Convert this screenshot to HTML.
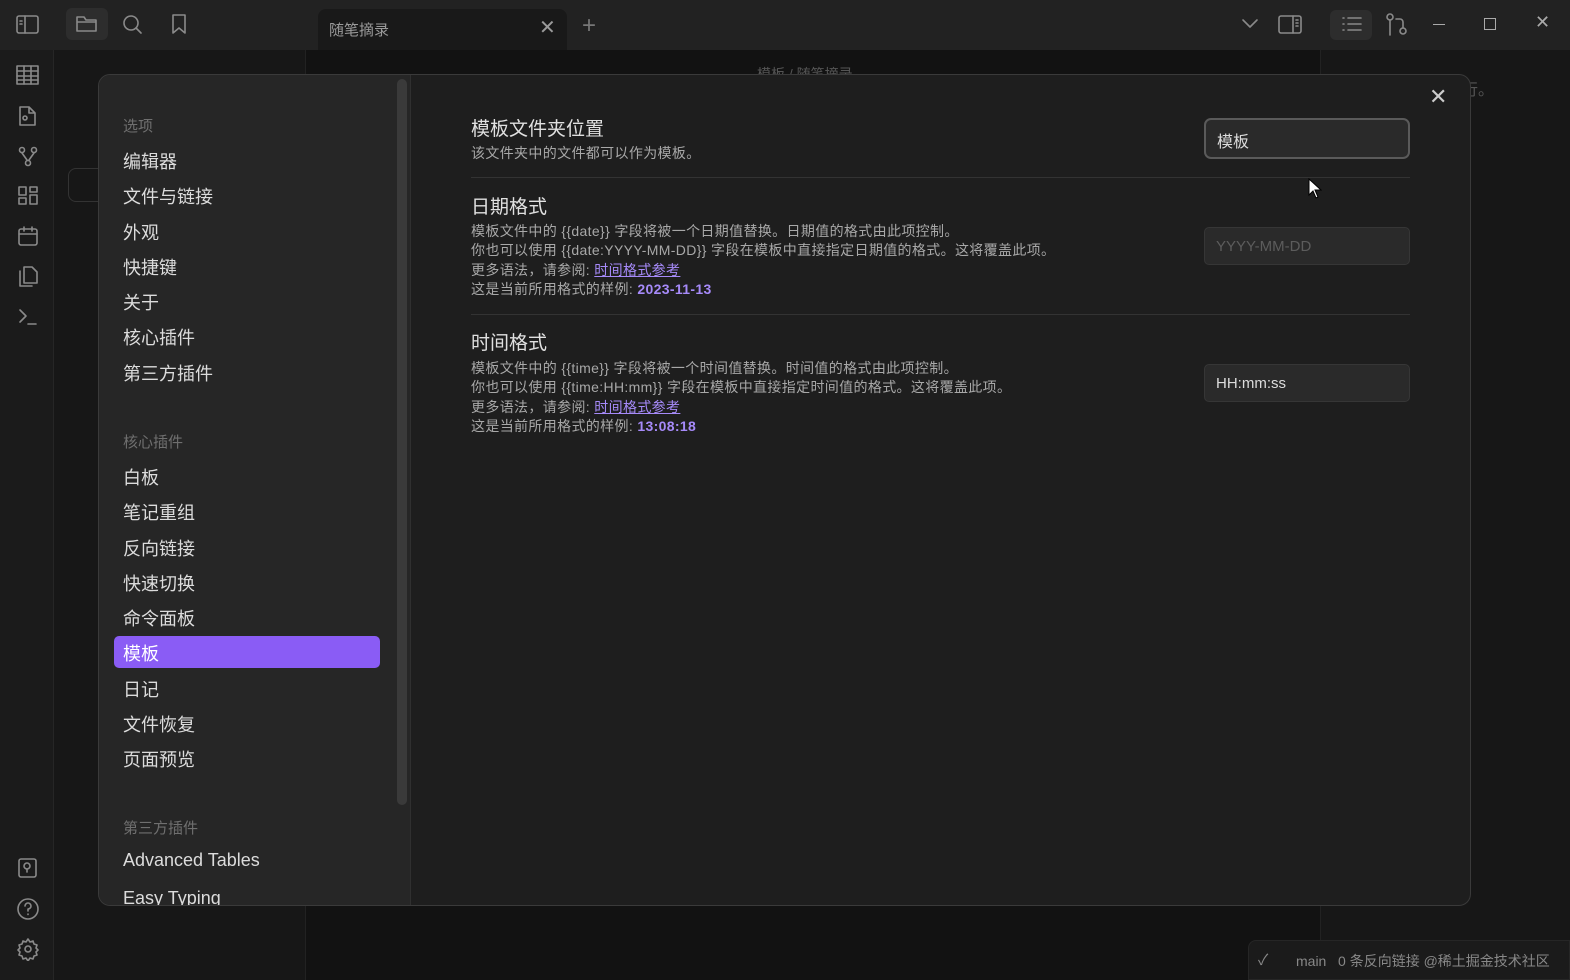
<!DOCTYPE html>
<html><head><meta charset="utf-8"><style>
*{box-sizing:border-box;margin:0;padding:0}
body{width:1570px;height:980px;overflow:hidden;background:#141414;font-family:"Liberation Sans","Noto Sans CJK SC",sans-serif;position:relative;color:#dadada}
.abs{position:absolute}
.ic{position:absolute;stroke:#8a8a8a;fill:none;stroke-width:1.6;stroke-linecap:round;stroke-linejoin:round}
.nav{position:absolute;left:123px;font-size:18px;color:#dcdcdc}
.hd{position:absolute;left:123px;font-size:15px;color:#6f6f6f}
.t{position:absolute;left:471px;font-size:19px;color:#e0e0e0}
.d{position:absolute;left:471px;font-size:14px;color:#a8a8a8;line-height:19.3px;letter-spacing:0.35px}
.d a{color:#a68af9;text-decoration:underline}
.d b{color:#a68af9}
.inp{position:absolute;left:1204px;width:206px;height:38px;background:#2a2a2a;border:1px solid #363636;border-radius:5px;font-size:15px;padding:10px 11px;color:#dcdcdc}
</style></head><body>
<div class="abs" style="left:0;top:0;width:1570px;height:50px;background:#222"></div>
<div class="abs" style="left:66px;top:8px;width:42px;height:32px;background:#2d2d2d;border-radius:6px"></div>
<div class="abs" style="left:318px;top:9px;width:249px;height:41px;background:#191919;border-radius:8px 8px 0 0"></div>
<div class="abs" style="left:329px;top:19px;font-size:15px;color:#9a9a9a">随笔摘录</div>
<div class="abs" style="left:539px;top:15px;font-size:20px;color:#9a9a9a">✕</div>
<div class="abs" style="left:582px;top:12px;font-size:24px;color:#777">+</div>
<div class="abs" style="left:1330px;top:10px;width:42px;height:30px;background:#2d2d2d;border-radius:6px"></div>
<svg class="ic" style="left:16px;top:14px" width="24" height="22"><rect x="1" y="2" width="21" height="17" rx="2"/><path d="M9 2v17M4 7h2M4 10h2"/></svg>
<svg class="ic" style="left:75px;top:13px" width="24" height="22"><path d="M2 4h7l2 3h10v11H2z M2 9h19"/></svg>
<svg class="ic" style="left:121px;top:13px" width="24" height="24"><circle cx="10" cy="10" r="7"/><path d="M15 15l5 5"/></svg>
<svg class="ic" style="left:170px;top:13px" width="20" height="22"><path d="M3 2h12v18l-6-5-6 5z"/></svg>
<svg class="ic" style="left:1240px;top:17px" width="20" height="14"><path d="M3 3l7 7 7-7"/></svg>
<svg class="ic" style="left:1278px;top:14px" width="26" height="22"><rect x="1" y="2" width="22" height="17" rx="2"/><path d="M15 2v17M18 6h2M18 9h2M18 12h2"/></svg>
<svg class="ic" style="left:1340px;top:13px" width="24" height="22"><path d="M8 5h13M8 11h13M8 17h13M3 5h1M3 11h1M3 17h1"/></svg>
<svg class="ic" style="left:1385px;top:13px" width="24" height="24"><circle cx="5" cy="4" r="3"/><circle cx="18" cy="18" r="3"/><path d="M5 7v15M18 15v-6a3 3 0 0 0-3-3h-4"/></svg>
<div class="abs" style="left:1433px;top:24px;width:12px;height:1px;background:#aaa"></div>
<div class="abs" style="left:1484px;top:18px;width:12px;height:12px;border:1px solid #aaa"></div>
<div class="abs" style="left:1535px;top:12px;font-size:18px;color:#aaa">✕</div>
<div class="abs" style="left:0;top:50px;width:54px;height:930px;background:#1b1b1b;border-right:1px solid #262626"></div>
<div class="abs" style="left:54px;top:50px;width:251px;height:930px;background:#171717"></div>
<div class="abs" style="left:305px;top:50px;width:1015px;height:930px;background:#121212;border-left:1px solid #222"></div>
<div class="abs" style="left:1320px;top:50px;width:250px;height:930px;background:#171717;border-left:1px solid #222"></div>
<div class="abs" style="left:68px;top:168px;width:40px;height:34px;border:1px solid #333;border-radius:8px"></div>
<div class="abs" style="left:1462px;top:76px;font-size:16px;color:#555">行。</div>
<div class="abs" style="left:1248px;top:940px;width:322px;height:40px;background:#1b1b1b;border-top-left-radius:8px;border:1px solid #262626"></div>
<div class="abs" style="left:1258px;top:949px;font-size:15px;color:#888">✓</div>
<div class="abs" style="left:1296px;top:951px;font-size:14px;color:#888">main&nbsp;&nbsp; 0 条反向链接 @稀土掘金技术社区</div>
<svg class="ic" style="left:16px;top:64px" width="24" height="22"><rect x="1" y="2" width="21" height="18"/><path d="M1 7h21M1 12h21M1 16h21M8 2v18M15 2v18"/></svg>
<svg class="ic" style="left:17px;top:104px" width="22" height="24"><path d="M3 3h9l6 6v12H3z M12 3v6h6"/><circle cx="8" cy="14" r="2"/></svg>
<svg class="ic" style="left:17px;top:145px" width="22" height="24"><circle cx="5" cy="5" r="2.5"/><circle cx="17" cy="5" r="2.5"/><circle cx="11" cy="18" r="2.5"/><path d="M5 8l5 7M17 8l-5 7"/></svg>
<svg class="ic" style="left:17px;top:185px" width="22" height="22"><rect x="2" y="2" width="7" height="8"/><rect x="13" y="2" width="7" height="5"/><rect x="2" y="13" width="7" height="6"/><rect x="13" y="10" width="7" height="9"/></svg>
<svg class="ic" style="left:17px;top:225px" width="22" height="22"><rect x="2" y="4" width="18" height="16" rx="2"/><path d="M2 9h18M7 2v4M15 2v4"/></svg>
<svg class="ic" style="left:17px;top:264px" width="22" height="24"><path d="M7 3h8l5 5v11H7z M3 7v15h12"/></svg>
<svg class="ic" style="left:17px;top:305px" width="22" height="22"><path d="M3 5l6 6-6 6M11 19h8"/></svg>
<svg class="ic" style="left:17px;top:857px" width="22" height="22"><rect x="2" y="2" width="17" height="18" rx="2"/><circle cx="10" cy="9" r="3"/><path d="M10 12v3"/></svg>
<svg class="ic" style="left:16px;top:897px" width="24" height="24"><circle cx="12" cy="12" r="10"/><path d="M9 9a3 3 0 1 1 3 3v2M12 17v.5"/></svg>
<svg class="ic" style="left:16px;top:937px" width="24" height="24"><circle cx="12" cy="12" r="3"/><path d="M12 2l2 3 3-1 1 3 3 1-1 3 2 2-2 2 1 3-3 1-1 3-3-1-2 3-2-3-3 1-1-3-3-1 1-3-2-2 2-2-1-3 3-1 1-3 3 1z"/></svg>
<div class="abs" style="left:757px;top:64px;font-size:14px;color:#555">模板 / 随笔摘录</div>
<div class="abs" style="left:98px;top:74px;width:1373px;height:832px;background:#1e1e1e;border:1px solid #3a3a3a;border-radius:12px;overflow:hidden">
  <div class="abs" style="left:0;top:0;width:312px;height:832px;background:#262626;border-right:1px solid #303030"></div>
  <div class="abs" style="left:298px;top:4px;width:10px;height:726px;background:#3a3a3a;border-radius:5px"></div>
</div>
<div class="hd" style="top:115px">选项</div>
<div class="nav" style="top:148px">编辑器</div>
<div class="nav" style="top:183px">文件与链接</div>
<div class="nav" style="top:219px">外观</div>
<div class="nav" style="top:254px">快捷键</div>
<div class="nav" style="top:289px">关于</div>
<div class="nav" style="top:324px">核心插件</div>
<div class="nav" style="top:360px">第三方插件</div>
<div class="hd" style="top:431px">核心插件</div>
<div class="nav" style="top:464px">白板</div>
<div class="nav" style="top:499px">笔记重组</div>
<div class="nav" style="top:535px">反向链接</div>
<div class="nav" style="top:570px">快速切换</div>
<div class="nav" style="top:605px">命令面板</div>
<div class="abs" style="left:114px;top:636px;width:266px;height:32px;background:#8a5cf5;border-radius:5px"></div>
<div class="nav" style="top:640px;color:#fff">模板</div>
<div class="nav" style="top:676px">日记</div>
<div class="nav" style="top:711px">文件恢复</div>
<div class="nav" style="top:746px">页面预览</div>
<div class="hd" style="top:817px">第三方插件</div>
<div class="nav" style="top:850px">Advanced Tables</div>
<div class="abs" style="left:123px;top:887px;font-size:18px;color:#dcdcdc;height:18px;overflow:hidden;line-height:22px">Easy Typing</div>
<div class="abs" style="left:1429px;top:84px;font-size:22px;color:#ccc">✕</div>
<div class="t" style="top:114px">模板文件夹位置</div>
<div class="d" style="top:144px">该文件夹中的文件都可以作为模板。</div>
<div class="inp" style="top:118px;height:41px;border:2px solid #5a5a5a;border-radius:7px;font-size:16px;padding-top:8px">模板</div>
<div class="abs" style="left:471px;top:177px;width:939px;height:1px;background:#333"></div>
<div class="t" style="top:192px">日期格式</div>
<div class="d" style="top:222px">模板文件中的 {{date}} 字段将被一个日期值替换。日期值的格式由此项控制。<br>你也可以使用 {{date:YYYY-MM-DD}} 字段在模板中直接指定日期值的格式。这将覆盖此项。<br>更多语法，请参阅: <a>时间格式参考</a><br>这是当前所用格式的样例: <b>2023-11-13</b></div>
<div class="inp" style="top:227px;color:#5c5c5c">YYYY-MM-DD</div>
<div class="abs" style="left:471px;top:314px;width:939px;height:1px;background:#333"></div>
<div class="t" style="top:328px">时间格式</div>
<div class="d" style="top:359px">模板文件中的 {{time}} 字段将被一个时间值替换。时间值的格式由此项控制。<br>你也可以使用 {{time:HH:mm}} 字段在模板中直接指定时间值的格式。这将覆盖此项。<br>更多语法，请参阅: <a>时间格式参考</a><br>这是当前所用格式的样例: <b>13:08:18</b></div>
<div class="inp" style="top:364px">HH:mm:ss</div>
<svg class="abs" style="left:1308px;top:178px" width="14" height="22"><path d="M1 1v16l4-4 3 7 2-1-3-7h6z" fill="#fff" stroke="#000"/></svg>
</body></html>
